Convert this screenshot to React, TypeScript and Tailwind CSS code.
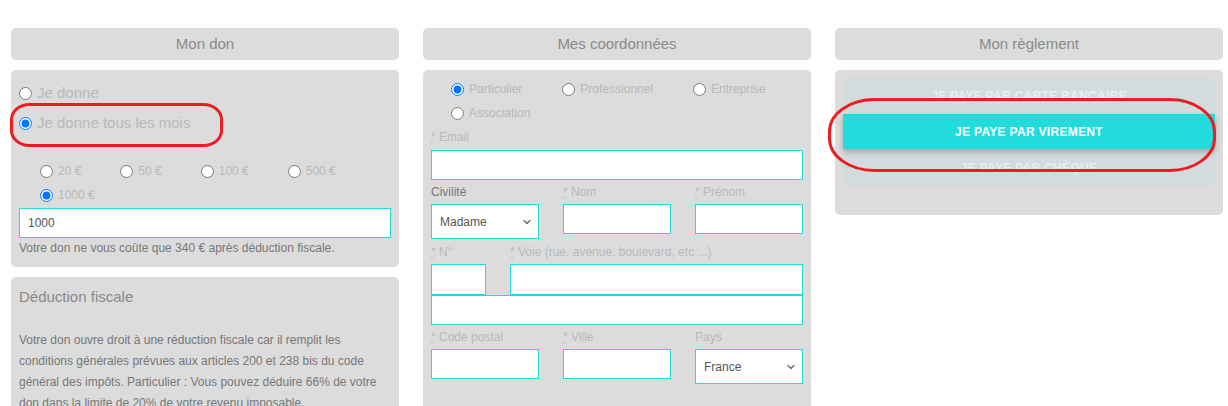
import React from "react";
import { ChevronDown } from "lucide-react";

const Header = ({ title }: { title: string }) => (
  <div className="h-[32px] shrink-0 rounded-[5px] bg-[#dcdcdc] flex items-center justify-center text-[15px] text-[#8a8a8a]">
    {title}
  </div>
);

const Radio = ({
  label,
  checked,
  name,
  className = "",
}: {
  label: string;
  checked?: boolean;
  name: string;
  className?: string;
}) => (
  <label className={`flex items-center gap-[5px] text-[#b8b8b8] ${className}`}>
    <input type="radio" name={name} defaultChecked={checked} className="w-[13px] h-[13px]" />
    <span>{label}</span>
  </label>
);

const Label = ({ text, required, dark }: { text: string; required?: boolean; dark?: boolean }) => (
  <div className={`text-[12px] leading-[16px] ${dark ? "text-[#777]" : "text-[#b8b8b8]"}`}>
    {required && (
      <>
        <abbr title="obligatoire">*</abbr>{" "}
      </>
    )}
    {text}
  </div>
);

const Field = ({ h = "h-[30px]" }: { h?: string }) => (
  <input type="text" className={`block w-full ${h} border border-[#22dcdc] bg-white px-[8px] text-[12px] text-[#555] outline-none`} />
);

const Select = ({ value }: { value: string }) => (
  <div className="relative">
    <select
      defaultValue={value}
      className="block w-full h-[35px] appearance-none border border-[#22dcdc] bg-white pl-[8px] text-[12px] text-[#555] outline-none"
    >
      <option>{value}</option>
    </select>
    <ChevronDown size={12} strokeWidth={2.5} className="absolute right-[6px] top-[12px] text-[#666] pointer-events-none" />
  </div>
);

const MonDon = () => {
  const amounts = ["20 €", "50 €", "100 €", "500 €", "1000 €"];
  return (
    <div className="w-[388px] flex flex-col gap-[10px]">
      <Header title="Mon don" />
      <div className="h-[197px] shrink-0 rounded-[5px] bg-[#dcdcdc] px-[8px] pt-[8px]">
        <Radio name="type" label="Je donne" className="h-[30px] text-[15px]" />
        <Radio name="type" label="Je donne tous les mois" checked className="h-[30px] text-[15px]" />
        <div className="mt-[21px] pl-[21px] flex flex-wrap gap-x-[39px] text-[12px]">
          {amounts.map((a) => (
            <Radio key={a} name="amount" label={a} checked={a === "1000 €"} className="h-[24px]" />
          ))}
        </div>
        <input
          type="text"
          defaultValue="1000"
          className="mt-[1px] block w-full h-[30px] border border-[#22dcdc] bg-white px-[8px] text-[12px] text-[#555] outline-none"
        />
        <p className="mt-[2px] text-[12px] leading-[16px] text-[#777]">
          Votre don ne vous coûte que 340 € après déduction fiscale.
        </p>
      </div>
      <div className="h-[200px] shrink-0 rounded-[5px] bg-[#dcdcdc] px-[8px] pt-[10px]">
        <h3 className="text-[15px] leading-[20px] text-[#888]">Déduction fiscale</h3>
        <p className="mt-[23px] text-[12px] leading-[21px] text-[#777]">
          Votre don ouvre droit à une réduction fiscale car il remplit les conditions générales prévues aux
          articles 200 et 238 bis du code général des impôts. Particulier : Vous pouvez déduire 66% de votre
          don dans la limite de 20% de votre revenu imposable.
        </p>
      </div>
    </div>
  );
};

const MesCoordonnees = () => (
  <div className="w-[388px] flex flex-col gap-[10px]">
    <Header title="Mes coordonnées" />
    <div className="h-[400px] shrink-0 rounded-[5px] bg-[#dcdcdc] px-[8px] pt-[7px]">
      <div className="pl-[20px] flex flex-wrap gap-x-[40px] text-[12px]">
        {["Particulier", "Professionnel", "Entreprise", "Association"].map((t) => (
          <Radio key={t} name="statut" label={t} checked={t === "Particulier"} className="h-[24px]" />
        ))}
      </div>
      <div className="mt-[4px]">
        <Label text="Email" required />
      </div>
      <div className="mt-[5px]">
        <Field />
      </div>
      <div className="mt-[4px] grid grid-cols-3 gap-x-[24px] items-start">
        <div>
          <Label text="Civilité" dark />
          <div className="mt-[4px]">
            <Select value="Madame" />
          </div>
        </div>
        <div>
          <Label text="Nom" required />
          <div className="mt-[4px]">
            <Field />
          </div>
        </div>
        <div>
          <Label text="Prénom" required />
          <div className="mt-[4px]">
            <Field />
          </div>
        </div>
      </div>
      <div className="mt-[5px] flex gap-[24px]">
        <div className="w-[55px] shrink-0">
          <Label text="N°" required />
          <div className="mt-[4px]">
            <Field h="h-[31px]" />
          </div>
        </div>
        <div className="flex-1">
          <Label text="Voie (rue, avenue, boulevard, etc ...)" required />
          <div className="mt-[4px]">
            <Field h="h-[31px]" />
          </div>
        </div>
      </div>
      <Field />
      <div className="mt-[4px] grid grid-cols-3 gap-x-[24px] items-start">
        <div>
          <Label text="Code postal" required />
          <div className="mt-[4px]">
            <Field />
          </div>
        </div>
        <div>
          <Label text="Ville" required />
          <div className="mt-[4px]">
            <Field />
          </div>
        </div>
        <div>
          <Label text="Pays" />
          <div className="mt-[4px]">
            <Select value="France" />
          </div>
        </div>
      </div>
    </div>
  </div>
);

const MonReglement = () => (
  <div className="w-[388px] flex flex-col gap-[10px]">
    <Header title="Mon règlement" />
    <div className="h-[145px] shrink-0 rounded-[5px] bg-[#dcdcdc] px-[8px] pt-[8px]">
      <div className="bg-[#d3dcdd] flex flex-col text-[12px] font-bold tracking-[0.3px]">
        <div className="h-[36px] flex items-center justify-center text-[#e9eeee]">JE PAYE PAR CARTE BANCAIRE</div>
        <button className="h-[35px] bg-[#22dcdc] text-white shadow-[0_3px_6px_rgba(0,0,0,0.25)] flex items-center justify-center">
          JE PAYE PAR VIREMENT
        </button>
        <div className="h-[37px] flex items-center justify-center text-[#e9eeee]">JE PAYE PAR CHÈQUE</div>
      </div>
    </div>
  </div>
);

export default function App() {
  return (
    <div className="relative w-[1228px] h-[406px] overflow-hidden bg-white font-['Liberation_Sans',Arial,sans-serif]">
      <div className="flex items-start gap-[24px] pl-[11px] pt-[28px]">
        <MonDon />
        <MesCoordonnees />
        <MonReglement />
      </div>
      <svg className="absolute inset-0 pointer-events-none" width="1228" height="406">
        <rect x="11.5" y="104.5" width="210" height="41" rx="18" ry="15" fill="none" stroke="#ed1c24" strokeWidth="3" />
        <rect x="829.5" y="99.5" width="385" height="71" rx="45" ry="32" fill="none" stroke="#ed1c24" strokeWidth="3" />
      </svg>
    </div>
  );
}
